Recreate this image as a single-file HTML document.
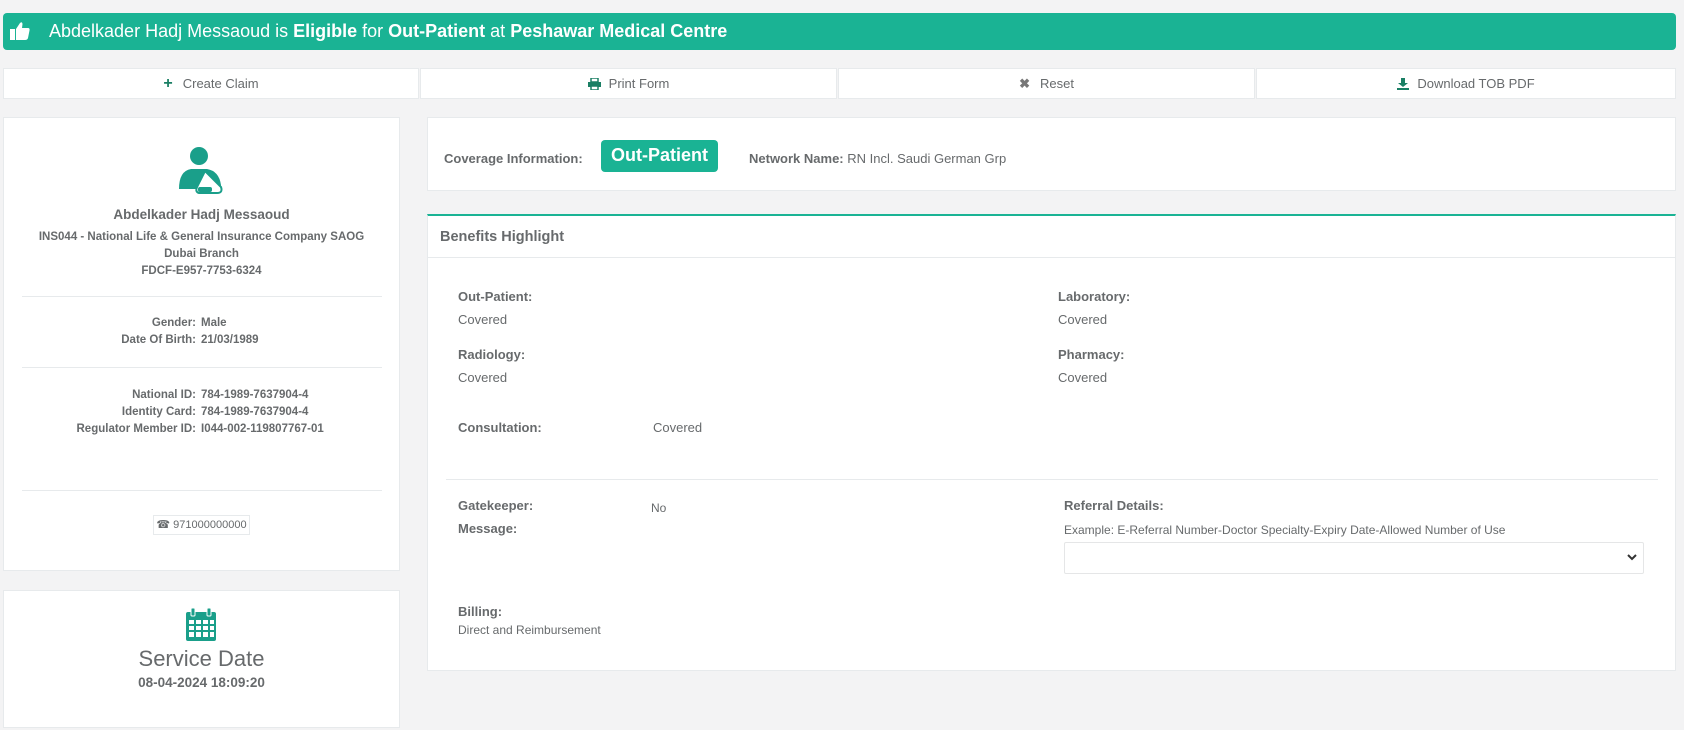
<!DOCTYPE html>
<html><head><meta charset="utf-8"><style>
*{box-sizing:border-box;margin:0;padding:0}
body{width:1684px;height:730px;background:#f3f3f4;font-family:"Liberation Sans",Arial,sans-serif;color:#676a6c;font-size:13px;position:relative;overflow:hidden}
.a{position:absolute;white-space:nowrap}
.card{position:absolute;background:#fff;border:1px solid #e7eaec}
.btn{position:absolute;top:68px;height:31px;background:#fff;border:1px solid #e7eaec;text-align:center;line-height:29px;font-size:13px;color:#676a6c}
.btn svg{vertical-align:-2px;margin-right:8px}
b{font-weight:bold}
.hr{position:absolute;height:1px;background:#e7eaec}
.c{text-align:center}
</style></head><body>
<div class="a" style="left:3px;top:13px;width:1673px;height:37px;background:#1ab394;border-radius:4px"></div>
<svg class="a" style="left:9px;top:20px" width="22" height="22" viewBox="0 0 22 22"><rect x="1" y="9" width="5" height="11" fill="#fff"/><path d="M7 9 L11 3 Q13 1 13.5 4 L13 8 L19 8 Q21 8 20.5 10.5 L19 18 Q18.5 20 16 20 L7 20 Z" fill="#fff"/></svg>
<div class="a" style="left:49px;top:21px;font-size:18px;color:#fff">Abdelkader Hadj Messaoud is <b>Eligible</b> for <b>Out-Patient</b> at <b>Peshawar Medical Centre</b></div>

<div class="btn" style="left:3px;width:416px"><span style="color:#1a7f64;font-weight:bold;font-size:16px;margin-right:10px">+</span>Create Claim</div>
<div class="btn" style="left:420px;width:417px"><svg width="13" height="12" viewBox="0 0 13 12"><rect x="3" y="0" width="7" height="4" fill="none" stroke="#1a7f64" stroke-width="1.5"/><rect x="0" y="4" width="13" height="5" fill="#1a7f64"/><rect x="3" y="8" width="7" height="4" fill="#fff" stroke="#1a7f64" stroke-width="1.5"/></svg>Print Form</div>
<div class="btn" style="left:838px;width:417px"><span style="color:#777;font-weight:bold;margin-right:10px">✖</span>Reset</div>
<div class="btn" style="left:1256px;width:420px"><svg width="12" height="12" viewBox="0 0 12 12"><path d="M4 0h4v5h3L6 9 1 5h3z" fill="#1a7f64"/><rect x="0" y="10" width="12" height="2" fill="#1a7f64"/></svg>Download TOB PDF</div>

<div class="card" style="left:3px;top:117px;width:397px;height:454px"></div>
<svg class="a" style="left:177px;top:145px" width="48" height="50" viewBox="0 0 48 50"><circle cx="22" cy="11" r="9" fill="#1a9f8a"/><path d="M2 44 Q2 26 14 24 L30 24 Q42 26 44 40 L44 44 Z" fill="#1a9f8a"/><path d="M28 26 L44 42 Q46 48 40 48 L22 48 Q18 47 20 42 Z" fill="#fff" stroke="#1a9f8a" stroke-width="2"/><rect x="21" y="42" width="14" height="5" rx="2" fill="#1a9f8a"/></svg>
<div class="a c" style="left:3px;width:397px;top:207px;font-weight:bold;font-size:13.5px">Abdelkader Hadj Messaoud</div>
<div class="a c" style="left:3px;width:397px;top:229px;font-weight:bold;font-size:11.5px;line-height:17px;white-space:normal">INS044 - National Life &amp; General Insurance Company SAOG<br>Dubai Branch<br>FDCF-E957-7753-6324</div>
<div class="hr" style="left:22px;width:360px;top:296px"></div>
<div class="a" style="left:3px;width:193px;text-align:right;top:315px;font-weight:bold;font-size:11.5px;line-height:17px">Gender:<br>Date Of Birth:</div>
<div class="a" style="left:201px;top:315px;font-weight:bold;font-size:11.5px;line-height:17px">Male<br>21/03/1989</div>
<div class="hr" style="left:22px;width:360px;top:367px"></div>
<div class="a" style="left:3px;width:193px;text-align:right;top:387px;font-weight:bold;font-size:11.5px;line-height:17px">National ID:<br>Identity Card:<br>Regulator Member ID:</div>
<div class="a" style="left:201px;top:387px;font-weight:bold;font-size:11.5px;line-height:17px">784-1989-7637904-4<br>784-1989-7637904-4<br>I044-002-119807767-01</div>
<div class="hr" style="left:22px;width:360px;top:490px"></div>
<div class="a" style="left:153px;top:515px;width:97px;height:20px;border:1px solid #e7eaec;font-size:11px;line-height:18px;text-align:center">☎ 971000000000</div>

<div class="card" style="left:3px;top:590px;width:397px;height:138px"></div>
<svg class="a" style="left:185px;top:608px" width="32" height="34" viewBox="0 0 32 34"><rect x="1" y="4" width="30" height="29" rx="2" fill="#1a9f8a"/><rect x="6" y="0" width="4" height="8" rx="1" fill="#1a9f8a" stroke="#fff"/><rect x="22" y="0" width="4" height="8" rx="1" fill="#1a9f8a" stroke="#fff"/><g fill="#fff"><rect x="4" y="12" width="5" height="4"/><rect x="11" y="12" width="5" height="4"/><rect x="18" y="12" width="5" height="4"/><rect x="25" y="12" width="4" height="4"/><rect x="4" y="18" width="5" height="4"/><rect x="11" y="18" width="5" height="4"/><rect x="18" y="18" width="5" height="4"/><rect x="25" y="18" width="4" height="4"/><rect x="4" y="24" width="5" height="5"/><rect x="11" y="24" width="5" height="5"/><rect x="18" y="24" width="5" height="5"/><rect x="25" y="24" width="4" height="5"/></g></svg>
<div class="a c" style="left:3px;width:397px;top:646px;font-size:22px">Service Date</div>
<div class="a c" style="left:3px;width:397px;top:675px;font-size:13.5px;font-weight:bold">08-04-2024 18:09:20</div>

<div class="card" style="left:427px;top:117px;width:1249px;height:74px"></div>
<div class="a" style="left:444px;top:151px;font-weight:bold;font-size:13px">Coverage Information:</div>
<div class="a" style="left:601px;top:140px;width:117px;height:32px;background:#1ab394;border-radius:4px;color:#fff;font-weight:bold;font-size:18px;line-height:31px;text-align:center">Out-Patient</div>
<div class="a" style="left:749px;top:151px;font-size:13px"><b>Network Name:</b> RN Incl. Saudi German Grp</div>

<div class="card" style="left:427px;top:214px;width:1249px;height:457px;border-top:2px solid #1ab394"></div>
<div class="a" style="left:440px;top:229px;font-weight:bold;font-size:14.5px">Benefits Highlight</div>
<div class="hr" style="left:428px;width:1247px;top:257px"></div>
<div class="a" style="left:458px;top:285px;line-height:23px"><b>Out-Patient:</b><br>Covered</div>
<div class="a" style="left:1058px;top:285px;line-height:23px"><b>Laboratory:</b><br>Covered</div>
<div class="a" style="left:458px;top:343px;line-height:23px"><b>Radiology:</b><br>Covered</div>
<div class="a" style="left:1058px;top:343px;line-height:23px"><b>Pharmacy:</b><br>Covered</div>
<div class="a" style="left:458px;top:420px"><b>Consultation:</b></div>
<div class="a" style="left:653px;top:420px">Covered</div>
<div class="hr" style="left:446px;width:1212px;top:479px"></div>
<div class="a" style="left:458px;top:494px;line-height:23px"><b>Gatekeeper:<br>Message:</b></div>
<div class="a" style="left:651px;top:501px;font-size:12px">No</div>
<div class="a" style="left:1064px;top:498px"><b>Referral Details:</b></div>
<div class="a" style="left:1064px;top:523px;font-size:12px">Example: E-Referral Number-Doctor Specialty-Expiry Date-Allowed Number of Use</div>
<div class="a" style="left:1064px;top:542px;width:580px;height:32px;border:1px solid #e5e6e7;border-radius:2px"></div>
<svg class="a" style="left:1627px;top:553px" width="10" height="8" viewBox="0 0 10 8"><path d="M1 2 L5 6 L9 2" fill="none" stroke="#333" stroke-width="2"/></svg>
<div class="a" style="left:458px;top:600px;line-height:23px"><b>Billing:</b></div>
<div class="a" style="left:458px;top:623px;font-size:12px">Direct and Reimbursement</div>
</body></html>
